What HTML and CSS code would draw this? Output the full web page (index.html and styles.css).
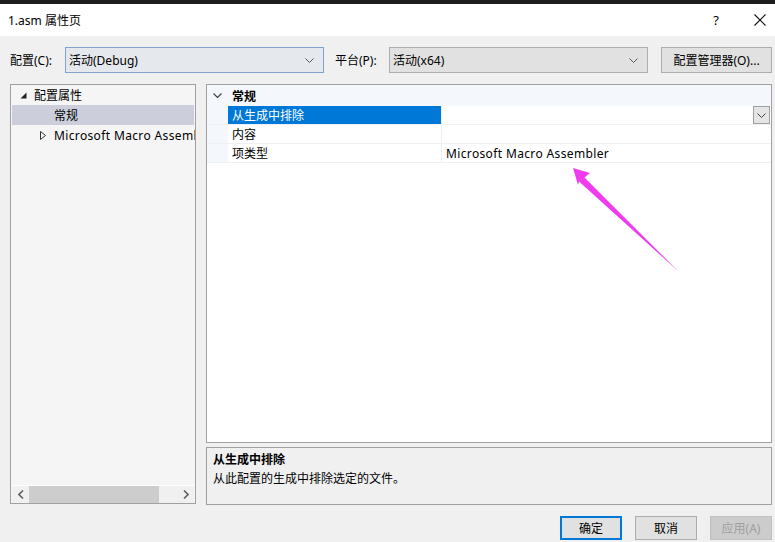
FILE: index.html
```html
<!DOCTYPE html>
<html lang="zh-CN">
<head>
<meta charset="utf-8">
<title>1.asm 属性页</title>
<link rel="stylesheet" href="styles.css">
</head>
<body>
<div class="window">
  <div class="topbar"></div>
  <div class="titlebar">
    <span class="title">1.asm 属性页</span>
    <span class="help">?</span>
    <span class="close">
      <svg width="12" height="12" viewBox="0 0 12 12"><path d="M0.5 0.5 L11.5 11.5 M11.5 0.5 L0.5 11.5" stroke="#111" stroke-width="1.1" fill="none"/></svg>
    </span>
  </div>

  <div class="toolbar">
    <label class="lbl">配置(C):</label>
    <div class="combo combo-focus config-combo">
      <span>活动(Debug)</span>
      <svg class="chev" width="9" height="5" viewBox="0 0 9 5"><path d="M0.5 0.5 L4.5 4.5 L8.5 0.5" stroke="#555" fill="none"/></svg>
    </div>
    <label class="lbl lbl-platform">平台(P):</label>
    <div class="combo platform-combo">
      <span>活动(x64)</span>
      <svg class="chev" width="9" height="5" viewBox="0 0 9 5"><path d="M0.5 0.5 L4.5 4.5 L8.5 0.5" stroke="#555" fill="none"/></svg>
    </div>
    <button class="btn mgr-btn">配置管理器(O)...</button>
  </div>

  <div class="main">
    <div class="tree">
      <div class="tree-rows">
        <div class="tree-row">
          <svg class="tri" width="7" height="7" viewBox="0 0 7 7"><path d="M6.5 0.5 L6.5 6.5 L0.5 6.5 Z" fill="#222"/></svg>
          <span>配置属性</span>
        </div>
        <div class="tree-row selected lvl2"><span>常规</span></div>
        <div class="tree-row lvl1b">
          <svg class="tri" width="6" height="9" viewBox="0 0 6 9"><path d="M0.5 0.5 L5.5 4.5 L0.5 8.5 Z" fill="none" stroke="#333"/></svg>
          <span class="lat">Microsoft Macro Assembler</span>
        </div>
      </div>
      <div class="hscroll">
        <span class="sarrow"><svg width="6" height="9" viewBox="0 0 6 9"><path d="M5 0.5 L1 4.5 L5 8.5" stroke="#606060" stroke-width="1.6" fill="none"/></svg></span>
        <span class="thumb"></span>
        <span class="track"></span>
        <span class="sarrow"><svg width="6" height="9" viewBox="0 0 6 9"><path d="M1 0.5 L5 4.5 L1 8.5" stroke="#606060" stroke-width="1.6" fill="none"/></svg></span>
      </div>
    </div>

    <div class="right">
      <div class="grid">
        <div class="cat-row">
          <span class="gutter"><svg width="9" height="5" viewBox="0 0 9 5"><path d="M0.5 0.5 L4.5 4.5 L8.5 0.5" stroke="#444" stroke-width="1.2" fill="none"/></svg></span>
          <span class="cat-name">常规</span>
        </div>
        <div class="prop-row">
          <span class="gutter"></span>
          <span class="pname sel">从生成中排除</span>
          <span class="pval pval-dd">
            <span class="dd"><svg width="9" height="5" viewBox="0 0 9 5"><path d="M0.5 0.5 L4.5 4.5 L8.5 0.5" stroke="#444" fill="none"/></svg></span>
          </span>
        </div>
        <div class="prop-row">
          <span class="gutter"></span>
          <span class="pname">内容</span>
          <span class="pval"></span>
        </div>
        <div class="prop-row">
          <span class="gutter"></span>
          <span class="pname">项类型</span>
          <span class="pval lat">Microsoft Macro Assembler</span>
        </div>
        <div class="grid-fill"></div>
      </div>
      <div class="desc">
        <div class="desc-title">从生成中排除</div>
        <div class="desc-text">从此配置的生成中排除选定的文件。</div>
      </div>
    </div>
  </div>

  <div class="buttons">
    <button class="btn btn-default">确定</button>
    <button class="btn">取消</button>
    <button class="btn btn-disabled">应用(A)</button>
  </div>

  <svg class="annot" width="775" height="542" viewBox="0 0 775 542">
    <path d="M573 168 L590 173 L584.5 177.5 L678 271 L579 181.5 L578 185 Z" fill="#ee3cee"/>
  </svg>
</div>
</body>
</html>
```

FILE: styles.css
```css
* { box-sizing: border-box; }
html, body { margin: 0; padding: 0; }
body {
  width: 775px;
  height: 542px;
  overflow: hidden;
  background: #f0f0f0;
  font-family: "Noto Sans", "Noto Sans CJK SC", sans-serif;
  font-size: 12px;
  color: #000;
}
.window {
  position: relative;
  width: 775px;
  height: 542px;
  display: flex;
  flex-direction: column;
}
.lat { letter-spacing: 0.36px; }
.topbar { height: 4px; background: #1e1e1e; flex: none; }
.titlebar {
  height: 32px;
  flex: none;
  background: #fff;
  display: flex;
  align-items: center;
  padding-left: 8px;
}
.title { flex: 1; font-size: 12px; }
.help { width: 14px; text-align: center; margin-right: 31px; font-size: 13px; }
.close { display: flex; margin-right: 9px; width: 12px; }

.toolbar {
  flex: none;
  display: flex;
  align-items: center;
  height: 26px;
  margin-top: 11px;
  padding-left: 10px;
}
.lbl { width: 55px; }
.lbl-platform { width: 54px; margin-left: 11px; }
.combo {
  height: 26px;
  display: flex;
  align-items: center;
  padding: 0 9px 0 3px;
  background: #e1e1e1;
  border: 1px solid #adadad;
}
.combo span { flex: 1; }
.combo-focus { background: #e5e8ec; border-color: #7ea4cc; }
.config-combo { width: 259px; }
.platform-combo { width: 259px; }
.chev { flex: none; }
.btn {
  font-family: inherit;
  font-size: 12px;
  color: #000;
  background: #e1e1e1;
  border: 1px solid #adadad;
  padding: 0;
  margin: 0;
  white-space: nowrap;
}
.mgr-btn { width: 111px; height: 26px; margin-left: 13px; }

.main {
  flex: none;
  display: flex;
  gap: 10px;
  margin-top: 11px;
  padding-left: 10px;
  height: 421px;
}
.tree {
  width: 186px;
  height: 420px;
  border: 1px solid #a0a0a0;
  background: #f5f5f5;
  display: flex;
  flex-direction: column;
  overflow: hidden;
}
.tree-rows { flex: 1; padding: 0 1px; overflow: hidden; }
.tree-row {
  height: 20px;
  display: flex;
  align-items: center;
  white-space: nowrap;
  padding-left: 8px;
}
.tree-row .tri { margin-right: 7px; flex: none; }
.tree-row.selected { background: #cccedb; }
.lvl2 { padding-left: 42px; }
.lvl1b { padding-left: 28px; }
.lvl1b .tri { margin-right: 8px; }
.hscroll {
  flex: none;
  height: 18px;
  display: flex;
  align-items: stretch;
  background: #f0f0f0;
  border-top: 1px solid #fff;
  margin: 0 1px 0 1px;
}
.sarrow { width: 17px; display: flex; align-items: center; justify-content: center; }
.thumb { width: 130px; background: #cdcdcd; }
.track { flex: 1; }

.right {
  width: 566px;
  display: flex;
  flex-direction: column;
  gap: 4px;
}
.grid {
  height: 360px;
  border: 1px solid #a0a0a0;
  background: #fff;
  display: flex;
  flex-direction: column;
}
.cat-row {
  height: 21px;
  display: flex;
  align-items: center;
  background: #f4f7fb;
  flex: none;
}
.gutter {
  width: 21px;
  align-self: stretch;
  background: #f4f7fb;
  display: flex;
  align-items: center;
  justify-content: center;
  flex: none;
}
.cat-name { font-weight: bold; padding-left: 4px; }
.prop-row {
  height: 19px;
  display: flex;
  flex: none;
  border-bottom: 1px solid #eef0f4;
}
.pname {
  width: 214px;
  padding-left: 4px;
  display: flex;
  align-items: center;
  border-right: 1px solid #eef0f4;
}
.pname.sel { background: #0078d7; color: #fff; }
.pval {
  flex: 1;
  display: flex;
  align-items: center;
  padding-left: 4px;
}
.pval-dd { justify-content: flex-end; }
.dd {
  width: 17px;
  height: 18px;
  margin-right: 1px;
  background: #e5e5e5;
  border: 1px solid #a0a0a0;
  display: flex;
  align-items: center;
  justify-content: center;
}
.grid-fill { flex: 1; }
.desc {
  height: 58px;
  border: 1px solid #a0a0a0;
  background: #f0f0f0;
  padding: 2px 6px;
}
.desc-title { font-weight: bold; height: 19px; line-height: 19px; }
.desc-text { height: 19px; line-height: 19px; }

.buttons {
  flex: none;
  display: flex;
  justify-content: flex-end;
  gap: 13px;
  margin-top: 11px;
  padding-right: 3px;
}
.buttons .btn { width: 62px; height: 24px; }
.btn-default { border: 2px solid #0078d7; }
.btn-disabled { color: #a0a0a0; background: #cccccc; border-color: #bfbfbf; }

.annot { position: absolute; left: 0; top: 0; pointer-events: none; }
```
